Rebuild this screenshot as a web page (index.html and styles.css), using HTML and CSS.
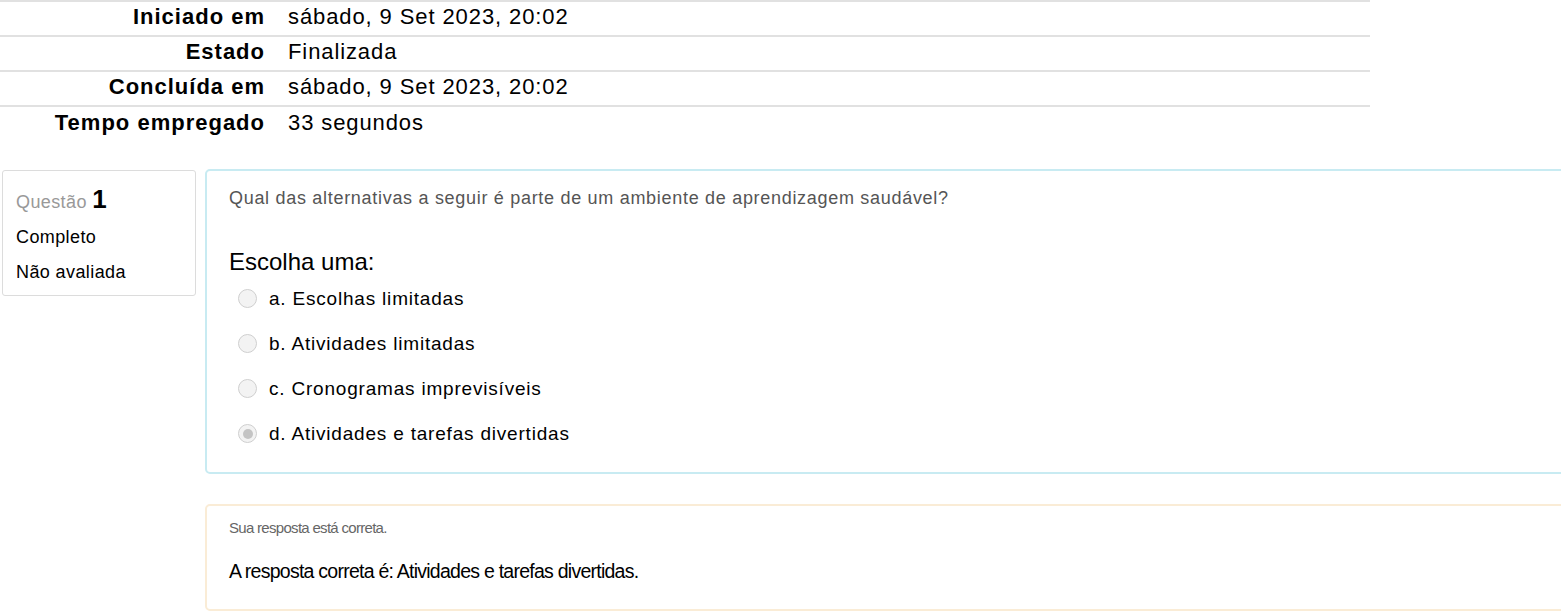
FILE: index.html
```html
<!DOCTYPE html>
<html lang="pt">
<head>
<meta charset="utf-8">
<title>Revisão</title>
<link rel="stylesheet" href="styles.css">
</head>
<body>
<table class="summary">
  <tr><th>Iniciado em</th><td>sábado, 9 Set 2023, 20:02</td></tr>
  <tr><th>Estado</th><td>Finalizada</td></tr>
  <tr><th>Concluída em</th><td>sábado, 9 Set 2023, 20:02</td></tr>
  <tr class="last"><th>Tempo empregado</th><td>33 segundos</td></tr>
</table>

<div class="que">
  <div class="info">
    <div class="qno"><span class="qlabel">Questão</span> <span class="num">1</span></div>
    <div class="state">Completo</div>
    <div class="grade">Não avaliada</div>
  </div>
  <div class="content">
    <div class="formulation">
      <div class="qtext">Qual das alternativas a seguir é parte de um ambiente de aprendizagem saudável?</div>
      <div class="prompt">Escolha uma:</div>
      <div class="answers">
        <div class="opt"><span class="radio"></span><span>a. Escolhas limitadas</span></div>
        <div class="opt"><span class="radio"></span><span>b. Atividades limitadas</span></div>
        <div class="opt"><span class="radio"></span><span>c. Cronogramas imprevisíveis</span></div>
        <div class="opt"><span class="radio checked"></span><span>d. Atividades e tarefas divertidas</span></div>
      </div>
    </div>
    <div class="outcome">
      <div class="fb">Sua resposta está correta.</div>
      <div class="right">A resposta correta é: Atividades e tarefas divertidas.</div>
    </div>
  </div>
</div>
</body>
</html>
```

FILE: styles.css
```css
html, body {
  margin: 0;
  padding: 0;
  background: #fff;
  overflow: hidden;
}
body {
  font-family: "Liberation Sans", Arial, sans-serif;
  color: #000;
  width: 1561px;
  height: 613px;
}
.summary {
  width: 1370px;
  border-collapse: collapse;
  font-size: 22px;
  letter-spacing: 0.9px;
}
.summary th,
.summary td {
  border-top: 2px solid #e1e1e1;
  height: 30px;
  padding: 0 0 3px 0;
  vertical-align: middle;
  line-height: 22px;
}
.summary th {
  width: 265px;
  text-align: right;
  font-weight: bold;
  letter-spacing: 1px;
}
.summary td {
  padding-left: 23px;
}
.summary tr.last th,
.summary tr.last td {
  height: 31px;
}
.que {
  display: flex;
  align-items: flex-start;
  margin-top: 28px;
  gap: 9px;
  padding-left: 2px;
}
.info {
  flex: 0 0 auto;
  width: 194px;
  height: 126px;
  border: 1px solid #dcdcdc;
  border-radius: 3px;
  padding: 14px 0 0 13px;
  box-sizing: border-box;
  margin-top: 1px;
  font-size: 18px;
  letter-spacing: 0.4px;
}
.qno {
  line-height: 28px;
}
.qlabel {
  color: #999;
  font-size: 18px;
}
.num {
  font-weight: bold;
  font-size: 26px;
}
.state,
.grade {
  line-height: 34px;
}
.state {
  margin-top: 4px;
}
.grade {
  margin-top: 1px;
}
.content {
  flex: 1 1 auto;
  margin-right: -20px;
  display: flex;
  flex-direction: column;
  gap: 30px;
}
.formulation {
  border: 2px solid #c8ebf2;
  border-radius: 5px;
  padding: 16px 22px 16px 22px;
  height: 305px;
  box-sizing: border-box;
}
.qtext {
  color: #555;
  font-size: 18px;
  letter-spacing: 0.7px;
  line-height: 22px;
}
.prompt {
  margin-top: 40px;
  font-size: 24px;
  line-height: 26px;
}
.answers {
  margin-top: 1px;
  padding-left: 9px;
}
.opt {
  display: flex;
  align-items: center;
  gap: 12px;
  height: 45px;
  font-size: 19px;
  letter-spacing: 0.8px;
}
.radio {
  width: 19px;
  height: 19px;
  border: 1px solid #cfcfcf;
  border-radius: 50%;
  background: #f3f3f3;
  box-sizing: border-box;
  position: relative;
  flex: 0 0 auto;
}
.radio.checked::after {
  content: "";
  position: absolute;
  left: 3.5px;
  top: 3.5px;
  width: 10px;
  height: 10px;
  border-radius: 50%;
  background: #c4c4c4;
}
.outcome {
  border: 2px solid #faecd6;
  border-radius: 5px;
  padding: 12px 22px 12px 22px;
  height: 107px;
  box-sizing: border-box;
}
.fb {
  color: #666;
  font-size: 15px;
  letter-spacing: -0.7px;
  line-height: 20px;
}
.right {
  margin-top: 20px;
  font-size: 19.5px;
  letter-spacing: -0.75px;
  line-height: 26px;
}
```
